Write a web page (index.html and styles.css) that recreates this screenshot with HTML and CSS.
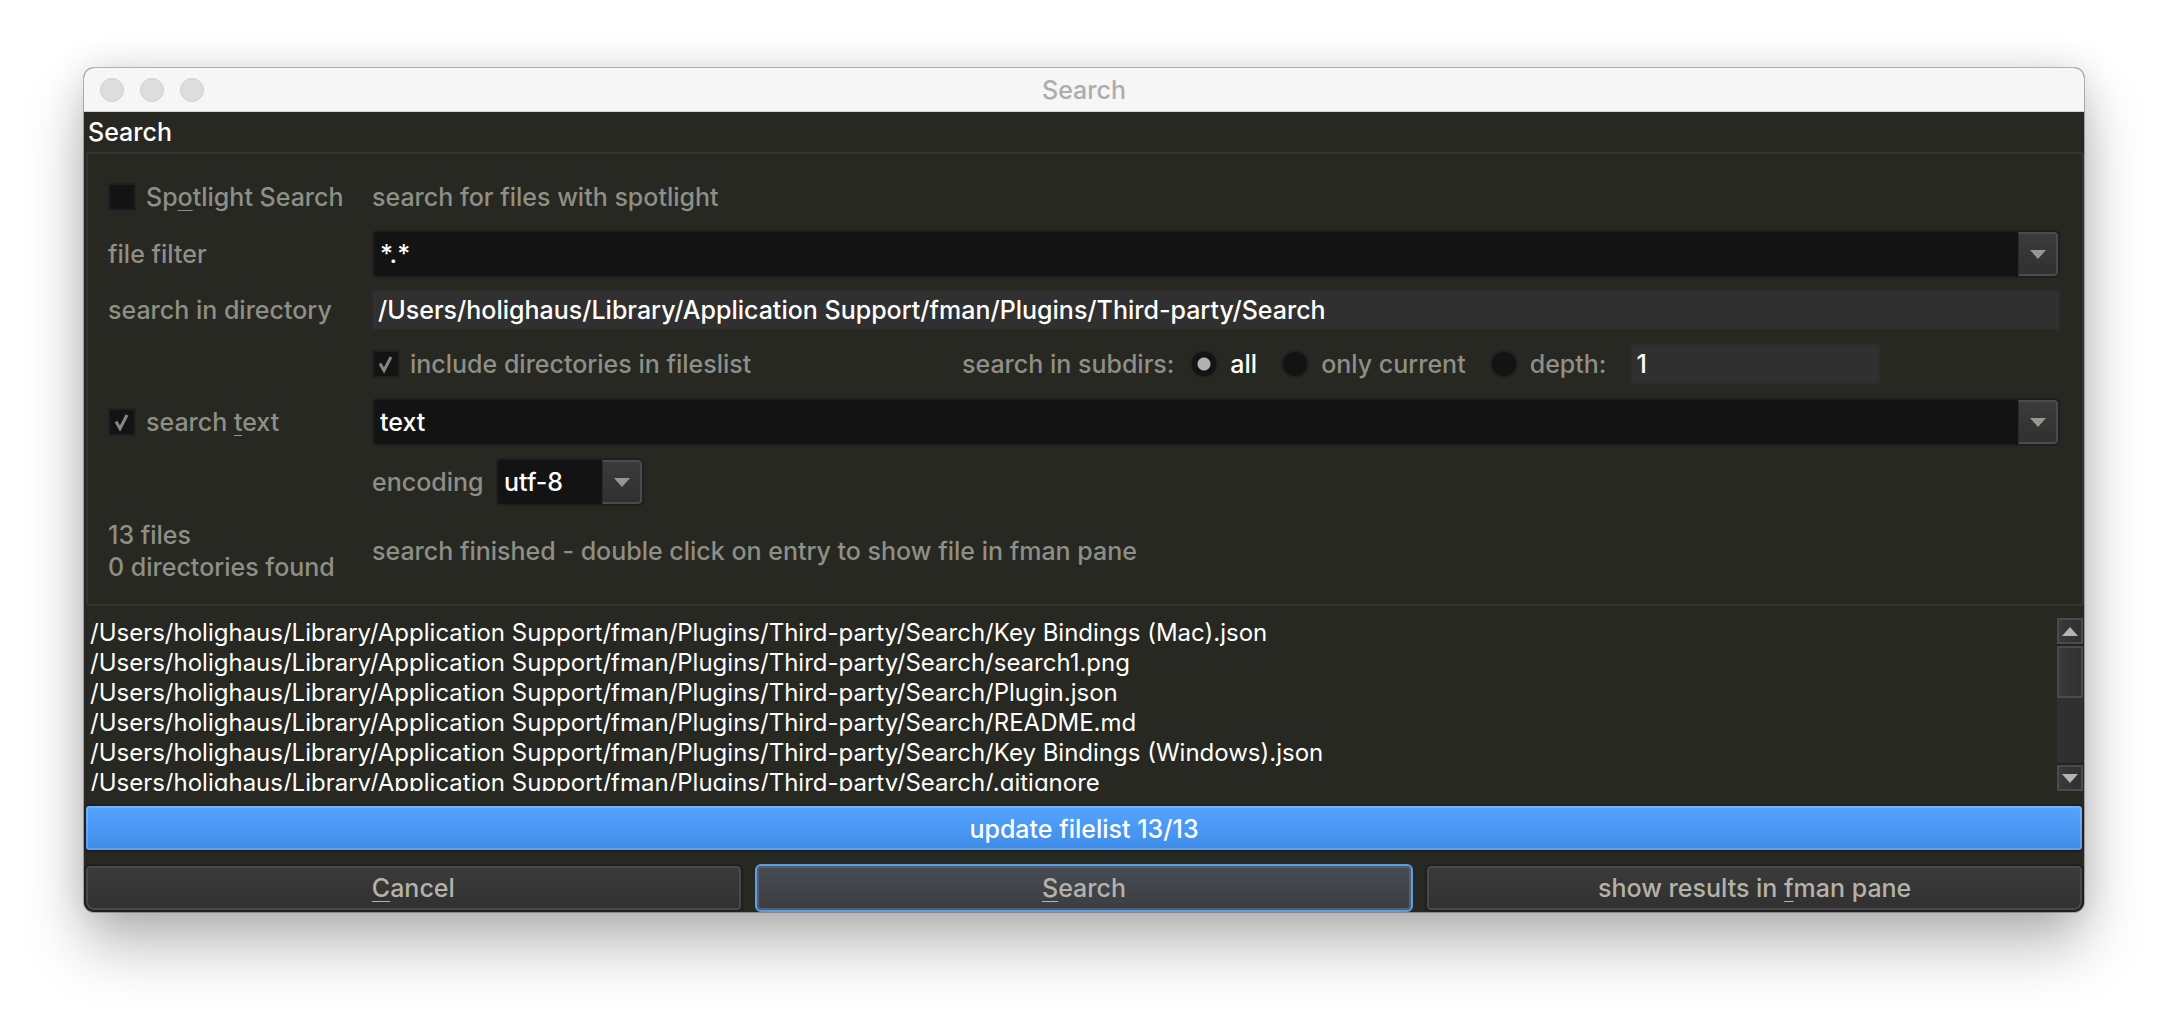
FILE: index.html
```html
<!DOCTYPE html>
<html lang="en">
<head>
<meta charset="utf-8">
<title>Search</title>
<link rel="stylesheet" href="styles.css">
</head>
<body>
<main class="window">
  <header class="titlebar">
    <div class="lights"><span class="light"></span><span class="light"></span><span class="light"></span></div>
    <h1 class="title">Search</h1>
  </header>
  <form class="dialog">
    <h2 class="group-title">Search</h2>
    <section class="group">
      <label class="option">
        <input class="check" type="checkbox">
        <span>Sp<span class="key">o</span>tlight Search</span>
      </label>
      <p class="note first-row">search for files with spotlight</p>

      <label for="filter">file filter</label>
      <div class="combo">
        <select class="combo-field" id="filter"><option>*.*</option></select>
        <span class="combo-arrow"><svg width="16" height="9" viewBox="0 0 16 9"><path d="M0 0h16L8 9z"/></svg></span>
      </div>

      <label for="directory">search in directory</label>
      <input class="field" id="directory" type="text" value="/Users/holighaus/Library/Application Support/fman/Plugins/Third-party/Search">

      <div class="options">
        <label class="option include">
          <span class="tick"><input class="check" type="checkbox" checked><svg width="28" height="28" viewBox="0 0 28 28"><path d="M8 13.5 12 20.5 19 7"/></svg></span>
          <span>include directories in fileslist</span>
        </label>
        <div class="subdirs" role="radiogroup" aria-labelledby="subdirs-label">
          <span id="subdirs-label">search in subdirs:</span>
          <label class="option selected"><input class="radio" type="radio" name="subdirs" checked>all</label>
          <label class="option"><input class="radio" type="radio" name="subdirs">only current</label>
          <label class="option"><input class="radio" type="radio" name="subdirs">depth:</label>
          <input class="field depth" type="text" value="1" aria-label="depth">
        </div>
      </div>

      <label class="option">
        <span class="tick"><input class="check" type="checkbox" checked><svg width="28" height="28" viewBox="0 0 28 28"><path d="M8 13.5 12 20.5 19 7"/></svg></span>
        <span>search <span class="key">t</span>ext</span>
      </label>
      <div class="combo">
        <select class="combo-field" aria-label="search text"><option>text</option></select>
        <span class="combo-arrow"><svg width="16" height="9" viewBox="0 0 16 9"><path d="M0 0h16L8 9z"/></svg></span>
      </div>

      <div class="encoding">
        <label class="encoding-label" for="encoding">encoding</label>
        <div class="combo combo-small">
          <select class="combo-field" id="encoding"><option>utf-8</option></select>
          <span class="combo-arrow"><svg width="16" height="9" viewBox="0 0 16 9"><path d="M0 0h16L8 9z"/></svg></span>
        </div>
      </div>

      <p class="note count">13 files<br>0 directories found</p>
      <p class="note">search finished - double click on entry to show file in fman pane</p>
    </section>

    <section class="results">
      <ul class="files">
        <li>/Users/holighaus/Library/Application Support/fman/Plugins/Third-party/Search/Key Bindings (Mac).json</li>
        <li>/Users/holighaus/Library/Application Support/fman/Plugins/Third-party/Search/search1.png</li>
        <li>/Users/holighaus/Library/Application Support/fman/Plugins/Third-party/Search/Plugin.json</li>
        <li>/Users/holighaus/Library/Application Support/fman/Plugins/Third-party/Search/README.md</li>
        <li>/Users/holighaus/Library/Application Support/fman/Plugins/Third-party/Search/Key Bindings (Windows).json</li>
        <li>/Users/holighaus/Library/Application Support/fman/Plugins/Third-party/Search/.gitignore</li>
      </ul>
      <div class="scrollbar">
        <button class="scroll-button" type="button" aria-label="Scroll up"><svg width="16" height="9" viewBox="0 0 16 9"><path d="M0 9h16L8 0z"/></svg></button>
        <div class="scroll-track"><div class="scroll-thumb"></div></div>
        <button class="scroll-button" type="button" aria-label="Scroll down"><svg width="16" height="9" viewBox="0 0 16 9"><path d="M0 0h16L8 9z"/></svg></button>
      </div>
    </section>

    <div class="progress" role="progressbar" aria-valuemin="0" aria-valuemax="13" aria-valuenow="13">update filelist 13/13</div>

    <footer class="actions">
      <button class="button" type="button"><span class="key">C</span>ancel</button>
      <button class="button primary" type="button"><span class="key">S</span>earch</button>
      <button class="button" type="button">show results in <span class="key">f</span>man pane</button>
    </footer>
  </form>
</main>
</body>
</html>
```
FILE: styles.css
```css
* { box-sizing: border-box; }

body {
  margin: 0;
  padding: 68px 84px 100px;
  background: #fff;
  color: #8e8f86;
  font: 500 25px/32px Inter, "Liberation Sans", sans-serif;
}

h1, h2, p, ul { margin: 0; padding: 0; font: inherit; }
input, select, button { margin: 0; font: inherit; border-radius: 0; }

.window {
  border-radius: 10px;
  background: #272822;
  box-shadow: 0 0 0 1px rgba(0, 0, 0, .25), 0 0 36px rgba(0, 0, 0, .13), 0 34px 60px rgba(0, 0, 0, .27);
}

.titlebar {
  display: grid;
  grid-template-columns: 1fr auto 1fr;
  align-items: center;
  height: 44px;
  padding: 0 16px;
  background: #f6f6f6;
  border-bottom: 1px solid #d3d6d0;
  border-radius: 10px 10px 0 0;
}
.title { color: #adadad; }
.lights { display: flex; gap: 16px; }
.light {
  width: 24px;
  height: 24px;
  border: 1px solid #cfcfcf;
  border-radius: 50%;
  background: #dddddd;
}

.group-title {
  height: 40px;
  padding: 4px;
  color: #fff;
}

.group {
  display: grid;
  grid-template-columns: 252px 1fr;
  gap: 12px;
  align-items: center;
  margin-left: 2px;
  padding: 22px 22px 20px 20px;
  border: 2px solid #343531;
  border-radius: 3px;
}
.first-row { padding: 5px 0; }
.count { padding: 1px 0; white-space: nowrap; }

.key {
  text-decoration: underline 1px;
  text-underline-offset: 4px;
  text-decoration-skip-ink: none;
}

.option { display: flex; align-items: center; gap: 10px; white-space: nowrap; }
.selected { color: #fff; }

.check, .radio {
  appearance: none;
  flex: none;
  width: 28px;
  height: 28px;
  border: 2px solid #202020;
  background: #131313;
}
.radio { border-radius: 50%; }
.radio:checked { background: radial-gradient(circle, #b0b0b0 6px, #131313 7px); }
.tick { display: grid; }
.tick > * { grid-area: 1 / 1; }
.tick path { fill: none; stroke: #85867f; stroke-width: 3; }

.field {
  height: 40px;
  width: 100%;
  padding: 0 4px;
  border: 2px solid #2d2d2d;
  background: #303030;
  color: #fff;
}

.combo { display: grid; grid-template-columns: 1fr 42px; }
.combo-field {
  grid-area: 1 / 1 / 2 / 3;
  appearance: none;
  height: 48px;
  padding: 0 6px;
  border: 2px solid #1f1f1f;
  border-radius: 5px;
  background: #131313;
  color: #fff;
}
.combo-arrow {
  grid-area: 1 / 2;
  display: grid;
  place-items: center;
  margin: 2px 2px 2px 0;
  border: 2px solid #4b4b4b;
  border-left: 1px solid #2a2a2a;
  border-radius: 0 4px 4px 0;
  background: linear-gradient(#3b3b3b, #303030);
  pointer-events: none;
}
.combo-arrow path { fill: #979790; }

.options {
  grid-column: 2;
  display: grid;
  grid-template-columns: 590px 1fr;
  align-items: center;
  height: 44px;
}
.subdirs { display: flex; align-items: center; gap: 24px; white-space: nowrap; }
.subdirs > :first-child { margin-right: -8px; }
.subdirs .option { gap: 12px; }
.depth { width: 250px; }

.encoding { grid-column: 2; display: flex; align-items: center; }
.encoding-label { width: 124px; }
.combo-small { width: 148px; }

.results { display: flex; padding: 12px 1px 0 6px; }
.files {
  flex: 1;
  height: 173px;
  overflow: hidden;
  color: #fff;
  font-size: 24px;
  font-weight: 400;
  line-height: 30px;
  list-style: none;
  white-space: nowrap;
}

.scrollbar {
  display: flex;
  flex-direction: column;
  gap: 2px;
  width: 26px;
  background: #222;
}
.scroll-button, .scroll-thumb { border: 2px solid #4b4b4b; background: linear-gradient(90deg, #3a3a3a, #303030); }
.scroll-button {
  display: grid;
  place-items: center;
  height: 26px;
  padding: 0;
}
.scroll-button path { fill: #b4b4b4; }
.scroll-track { flex: 1; background: #303030; }
.scroll-thumb { height: 52px; }

.progress {
  height: 48px;
  margin-top: 13px;
  padding: 8px;
  border: 2px solid #1f1f1f;
  border-radius: 5px;
  background: linear-gradient(#55a4ff, #3e8ce8);
  box-shadow: inset 0 0 0 2px rgba(255, 255, 255, .17);
  color: #fff;
  line-height: 30px;
  text-align: center;
}

.actions {
  display: grid;
  grid-template-columns: repeat(3, 1fr);
  gap: 12px;
  margin-top: 12px;
}
.button {
  height: 48px;
  padding: 0;
  border: 2px solid #1f1f1f;
  border-radius: 6px;
  background: linear-gradient(#3b3b3b, #303030);
  box-shadow: inset 0 0 0 2px #494949;
  color: #b5b3a9;
}
.button:first-child { border-bottom-left-radius: 10px; }
.button:last-child { border-bottom-right-radius: 10px; }
.primary {
  border-color: #559ff0;
  background: linear-gradient(#474b53, #3a3e42);
  box-shadow: inset 0 0 0 2px #5a5d63;
}
```
